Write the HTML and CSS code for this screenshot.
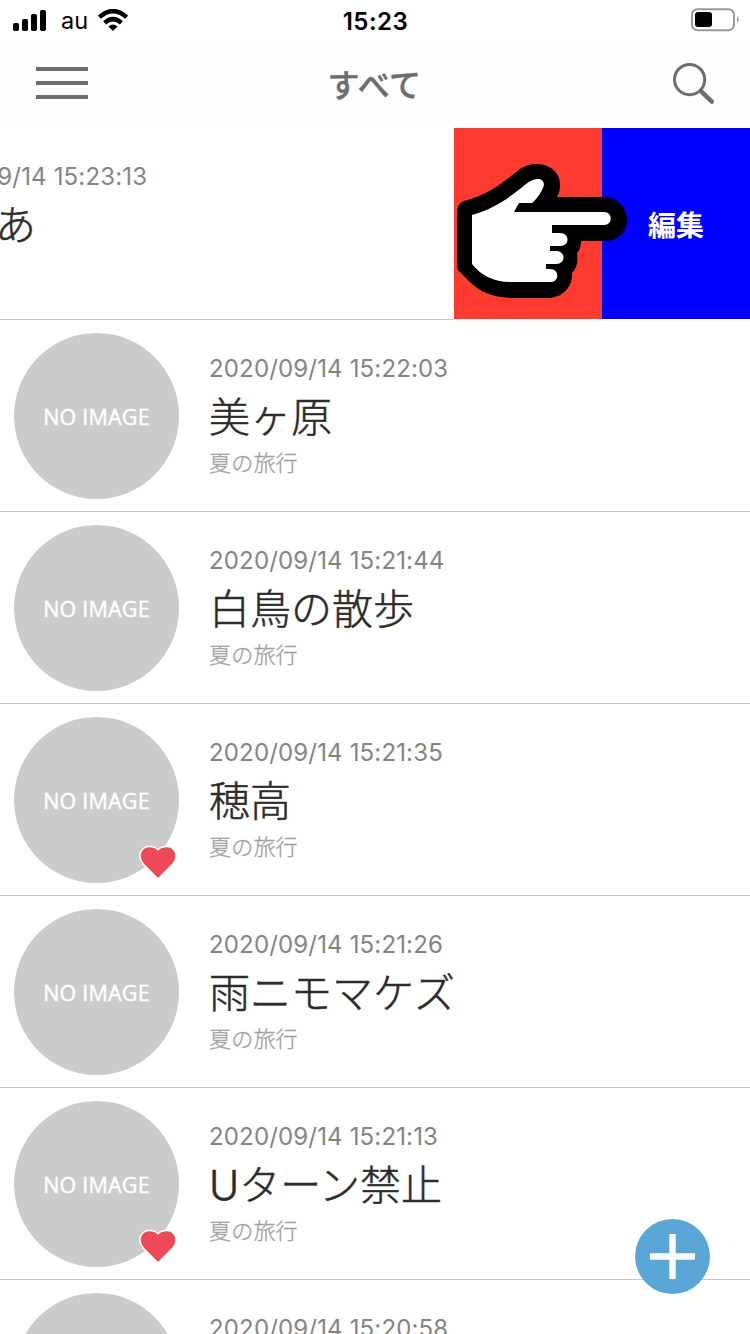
FILE: index.html
```html
<!DOCTYPE html>
<html lang="ja">
<head>
  <meta charset="UTF-8">
  <meta name="viewport" content="width=device-width, initial-scale=1.0">
  <title>すべて</title>
  <link rel="stylesheet" href="styles.css">
</head>
<body>
  <div class="status-bar">
    <div class="carrier">
      <svg width="34" height="21" viewBox="0 0 34 21">
        <rect x="0" y="13" width="6" height="8" rx="1.8"/>
        <rect x="9" y="9" width="6" height="12" rx="1.8"/>
        <rect x="18" y="4" width="6" height="17" rx="1.8"/>
        <rect x="27" y="0" width="6" height="21" rx="1.8"/>
      </svg>
      <span class="carrier-name">au</span>
      <svg width="30" height="22" viewBox="0 0 30 22">
        <path d="M15 22 L10.4 17.6 Q15 13.4 19.6 17.6 Z"/>
        <path d="M6.6 13.8 Q15 6.4 23.4 13.8" fill="none" stroke="#000" stroke-width="4.4"/>
        <path d="M1.4 8.2 Q15 -4 28.6 8.2" fill="none" stroke="#000" stroke-width="4.4"/>
      </svg>
    </div>
    <div class="clock">15:23</div>
    <svg class="battery" width="49" height="24" viewBox="0 0 49 24">
      <rect x="2" y="1.2" width="42" height="21" rx="5.5" fill="none" stroke="#9a9a9a" stroke-width="2"/>
      <rect x="5" y="4" width="17" height="15" rx="3"/>
      <path d="M47 8 Q50.4 11.5 47 15 Z" fill="#9a9a9a"/>
    </svg>
  </div>

  <header class="header">
    <button class="icon-btn">
      <svg width="52" height="34" viewBox="0 0 52 34" fill="none" stroke="#6d6d6d" stroke-width="4">
        <path d="M0 2h52M0 16h52M0 30h52"/>
      </svg>
    </button>
    <h1 class="header-title">すべて</h1>
    <button class="icon-btn">
      <svg width="42" height="42" viewBox="0 0 42 42" fill="none" stroke="#6d6d6d" stroke-linecap="round">
        <circle cx="17.6" cy="16.6" r="15.1" stroke-width="3"/>
        <path d="M29.2 28.4L39.8 38.6" stroke-width="4.4"/>
      </svg>
    </button>
  </header>

  <main class="list">
    <div class="row swiped">
      <div class="row-content">
        <div class="avatar"></div>
        <div class="info">
          <div class="date">2020/09/14 15:23:13</div>
          <div class="title">あああ</div>
        </div>
      </div>
      <button class="action delete"></button>
      <button class="action edit">編集</button>
      <svg class="pointer" width="172" height="136" viewBox="0 0 172 136">
        <path d="M7 37C36 30 53 12 63 5C82 -7 105 4 103 23Q103 28 100 33L147 33C160 33 170 43 170 56C170 69 160 77 147 77L124 77Q124 85 120 89Q122 102 115 109C116 124 104 134 91 134L58 134Q28 134 13 118L1 106Q0 104 0 100V48Q0 40 7 37Z"/>
        <path d="M15 51C41 44 59 28 69 20C80 11 90 15 86 24Q82 33 75 39H62L57 48H147C156 48 156 61 147 61H95V69H103C113 69 113 82 103 82H93V87H99C109 87 109 100 99 100H89V105H93C103 105 102 118 94 118H54Q29 118 15 100Z" fill="#fff"/>
      </svg>
    </div>

    <div class="row">
      <div class="row-content">
        <div class="avatar">NO IMAGE</div>
        <div class="info">
          <div class="date">2020/09/14 15:22:03</div>
          <div class="title">美ヶ原</div>
          <div class="category">夏の旅行</div>
        </div>
      </div>
    </div>

    <div class="row">
      <div class="row-content">
        <div class="avatar">NO IMAGE</div>
        <div class="info">
          <div class="date">2020/09/14 15:21:44</div>
          <div class="title">白鳥の散歩</div>
          <div class="category">夏の旅行</div>
        </div>
      </div>
    </div>

    <div class="row">
      <div class="row-content">
        <div class="avatar">NO IMAGE
          <svg class="heart" width="38" height="36" viewBox="0 0 38 36">
            <path d="M19 34L4.2 19C-3 10 3 1.5 10.5 1.5Q16 1.5 19 4.8Q22 1.5 27.5 1.5C35 1.5 41 10 33.8 19Z"/>
          </svg>
        </div>
        <div class="info">
          <div class="date">2020/09/14 15:21:35</div>
          <div class="title">穂高</div>
          <div class="category">夏の旅行</div>
        </div>
      </div>
    </div>

    <div class="row">
      <div class="row-content">
        <div class="avatar">NO IMAGE</div>
        <div class="info">
          <div class="date">2020/09/14 15:21:26</div>
          <div class="title">雨ニモマケズ</div>
          <div class="category">夏の旅行</div>
        </div>
      </div>
    </div>

    <div class="row">
      <div class="row-content">
        <div class="avatar">NO IMAGE
          <svg class="heart" width="38" height="36" viewBox="0 0 38 36">
            <path d="M19 34L4.2 19C-3 10 3 1.5 10.5 1.5Q16 1.5 19 4.8Q22 1.5 27.5 1.5C35 1.5 41 10 33.8 19Z"/>
          </svg>
        </div>
        <div class="info">
          <div class="date">2020/09/14 15:21:13</div>
          <div class="title">Uターン禁止</div>
          <div class="category">夏の旅行</div>
        </div>
      </div>
    </div>

    <div class="row">
      <div class="row-content">
        <div class="avatar"></div>
        <div class="info">
          <div class="date">2020/09/14 15:20:58</div>
        </div>
      </div>
    </div>
  </main>

  <button class="add-btn">
    <svg width="45" height="45" viewBox="0 0 45 45" stroke="#fff" stroke-width="6.4">
      <path d="M22.5 0v45M0 22.5h45"/>
    </svg>
  </button>
</body>
</html>
```

FILE: styles.css
```css
* {
  margin: 0;
  padding: 0;
  box-sizing: border-box;
}

body {
  height: 100vh;
  overflow: hidden;
  display: flex;
  flex-direction: column;
  background: #fff;
  font-family: Inter, "Noto Sans CJK JP", sans-serif;
}

button {
  border: none;
  background: none;
  font-family: inherit;
  cursor: pointer;
}

svg {
  display: block;
  flex: none;
}

.status-bar {
  flex: none;
  height: 40px;
  display: grid;
  grid-template-columns: 1fr auto 1fr;
  align-items: center;
  padding: 0 11px 0 13px;
}

.carrier {
  display: flex;
  align-items: center;
}

.carrier-name {
  margin: 1px 10px 0 14px;
  width: 27px;
  font-size: 23.5px;
  line-height: 28px;
}

.clock {
  padding-top: 3px;
  margin-left: -1px;
  font-size: 24px;
  font-weight: 600;
  line-height: 28px;
  letter-spacing: 0.5px;
}

.battery {
  justify-self: end;
}

.header {
  flex: none;
  height: 88px;
  display: flex;
  align-items: center;
  justify-content: space-between;
  padding: 0 36px;
  background: #fdfdfd;
}

.header-title {
  margin-left: -11px;
  padding-top: 3px;
  font-size: 32px;
  font-weight: 500;
  line-height: 40px;
  letter-spacing: 0.5px;
  -webkit-text-stroke: 0.4px;
  color: #6d6d6d;
}

.list {
  flex: 1;
  min-height: 0;
  overflow: hidden;
}

.row {
  position: relative;
  display: flex;
  height: 192px;
  overflow: hidden;
}

.row-content {
  flex: none;
  width: 750px;
  display: flex;
  gap: 30px;
  padding: 13px 14px 0;
  border-bottom: 1px solid #c8c7cc;
}

.swiped .row-content {
  margin-left: -296px;
}

.avatar {
  position: relative;
  flex: none;
  width: 165px;
  height: 166px;
  border-radius: 50%;
  background: #cbcbcb;
  color: #fff;
  font-family: "Open Sans", sans-serif;
  font-size: 21.5px;
  font-weight: 500;
  line-height: 168px;
  text-align: center;
  letter-spacing: 0.2px;
  -webkit-text-stroke: 0.4px;
}

.heart {
  position: absolute;
  left: 125px;
  top: 127.5px;
  fill: #ef4957;
  stroke: #fff;
  stroke-width: 1.5;
}

.info {
  padding-top: 22px;
  white-space: nowrap;
}

.date {
  font-size: 24px;
  line-height: 28px;
  letter-spacing: 0.16px;
  color: #848484;
}

/* light weight with a thin stroke to get close to Hiragino W3 */
.title {
  font-size: 41px;
  font-weight: 300;
  line-height: 50px;
  margin-top: 9px;
  -webkit-text-stroke: 0.5px;
  color: #2b2b2b;
}

.category {
  margin-top: 6px;
  font-size: 22px;
  font-weight: 300;
  line-height: 30px;
  letter-spacing: 0.2px;
  -webkit-text-stroke: 0.3px;
  color: #a0a0a0;
}

.action {
  flex: none;
  width: 148px;
  height: 191px;
  color: #fff;
  font-size: 28px;
  font-weight: 700;
}

.delete {
  background: #ff3b30;
}

.edit {
  background: #0000ff;
}

.pointer {
  position: absolute;
  left: 457px;
  top: 36px;
}

.add-btn {
  position: absolute;
  right: 40px;
  bottom: 40px;
  width: 75px;
  height: 75px;
  border-radius: 50%;
  background: #5aa7d7;
  display: flex;
  align-items: center;
  justify-content: center;
}
```
